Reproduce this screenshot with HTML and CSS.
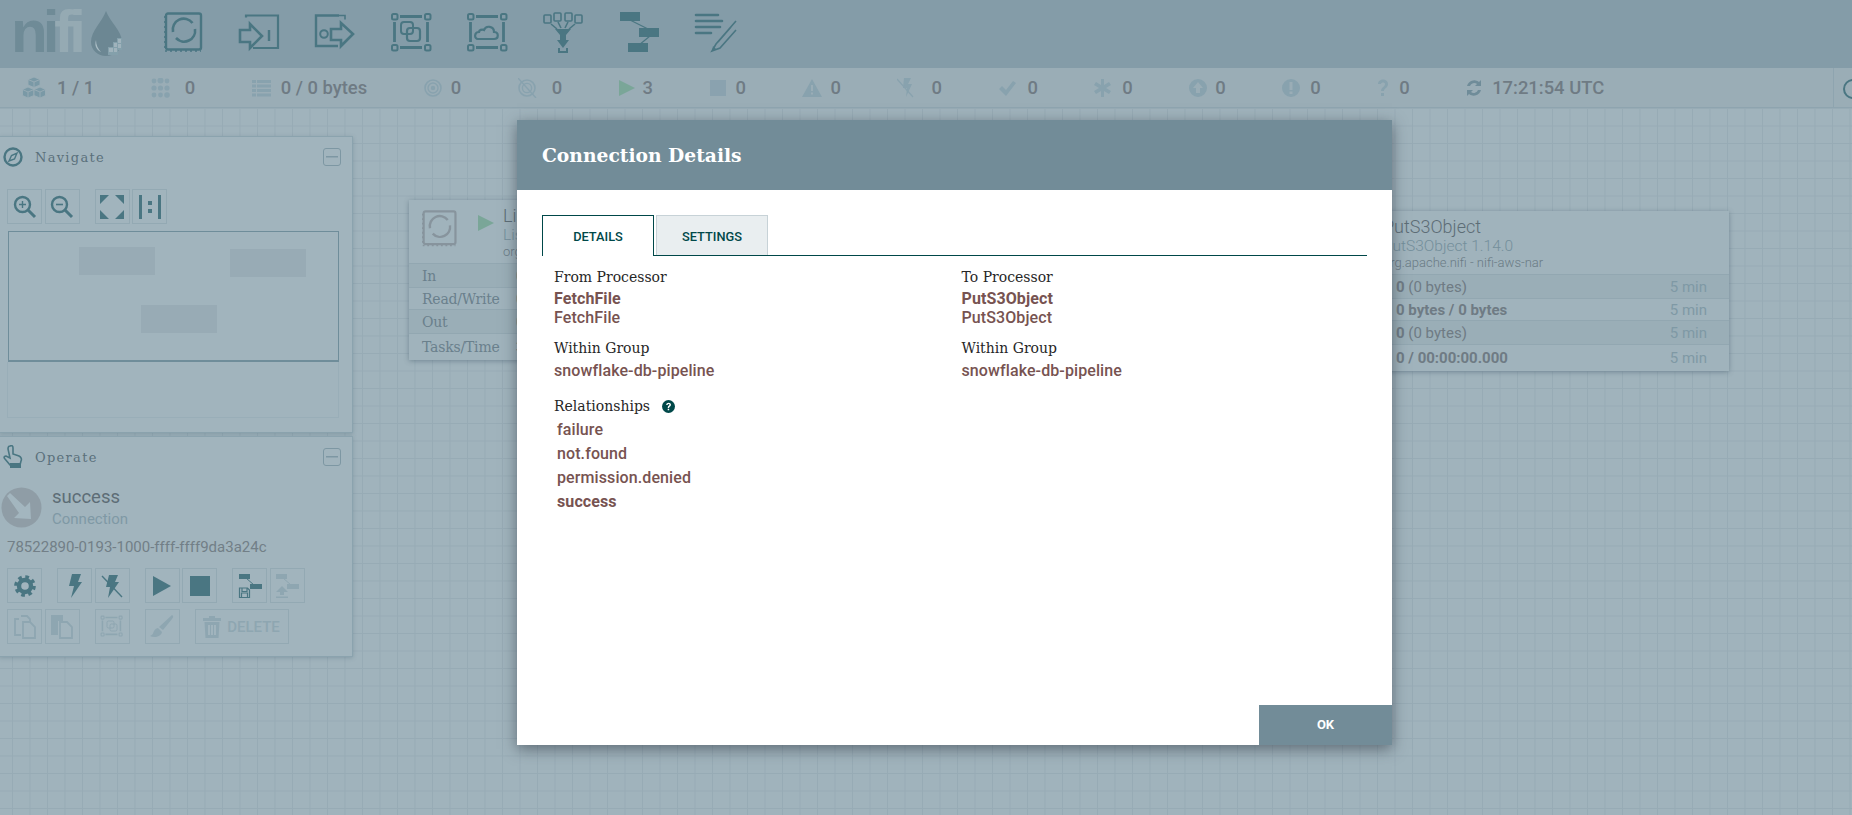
FILE: index.html
```html
<!DOCTYPE html>
<html lang="en">
<head>
  <meta charset="UTF-8"/>
  <title>NiFi Flow</title>
  <link rel="stylesheet" href="styles.css">
</head>
<body>
<svg class="defs" width="0" height="0">
  <symbol id="processor" viewBox="0 0 44 44">
    <rect x="4" y="1.5" width="35" height="36" rx="2" fill="none" stroke="currentColor" stroke-width="2.4"/>
    <path d="M3 4v34M3 39h36" fill="none" stroke="currentColor" stroke-width="1.6" stroke-dasharray="2 3"/>
    <path d="M11 20A11 11 0 0 1 30.500 11M33 17A11 11 0 0 1 14 26" fill="none" stroke="currentColor" stroke-width="2.6"/>
  </symbol>
  <symbol id="group" viewBox="0 0 44 44">
    <g fill="none" stroke="currentColor" stroke-width="2">
      <rect x="2" y="2" width="5.5" height="5.5" rx="1.5"/><rect x="35" y="2" width="5.5" height="5.5" rx="1.5"/>
      <rect x="2" y="33" width="5.5" height="5.5" rx="1.5"/><rect x="35" y="33" width="5.5" height="5.5" rx="1.5"/>
    </g>
    <path d="M10 4.5h22M10 35.5h22M4.5 10v20M37.5 10v20" stroke="currentColor" stroke-width="2.8"/>
  </symbol>
</svg>

<header class="toolbar">
  <div class="logo">
    <span class="logo-text"><span class="logo-ni">ni</span><span class="logo-fi">fi</span></span>
    <svg width="34" height="48" viewBox="0 0 34 48">
      <path d="M16 1C12 12 1 21 1 32c0 8 7 14 15 14s16-6 16-14C32 21 20 12 16 1z" fill="#6c8793"/>
      <path d="M6 30c-2 6 1 10 5 12-3-3-5-7-5-12z" fill="#a9bcc4"/>
      <path d="M18 37h5v-5h4v-4h5v12h-4v5h-10z" fill="#84a0ab"/>
      <path d="M19 38h4v4h-4zM24 38h3v4h-3zM24 33h3v4h-3zM28 29h3v4h-3zM28 34h3v4h-3z" fill="#a0b3bc"/>
    </svg>
  </div>
  <div class="tools">
    <svg class="tool"><use href="#processor"/></svg>
    <svg class="tool" viewBox="0 0 44 44">
      <path d="M8 3.5V1.5H40V34H15M8 29v-2" fill="none" stroke="currentColor" stroke-width="2.2" transform="translate(0 2)"/>
      <path d="M2 18h10v-6l12 12-12 12v-6H2z" fill="none" stroke="currentColor" stroke-width="2.6"/>
      <path d="M31 18v11" stroke="currentColor" stroke-width="2.4"/>
    </svg>
    <svg class="tool" viewBox="0 0 44 44">
      <path d="M25 3.5H2V34h22" fill="none" stroke="currentColor" stroke-width="2.4"/>
      <path d="M25 3.5h6v4" fill="none" stroke="currentColor" stroke-width="1.6"/>
      <circle cx="10" cy="22" r="3.8" fill="none" stroke="currentColor" stroke-width="2"/>
      <path d="M17 17h10v-6l12 11-12 12v-6H17z" fill="none" stroke="currentColor" stroke-width="2.6"/>
    </svg>
    <svg class="tool" viewBox="0 0 44 44">
      <use href="#group" width="44" height="44"/>
      <rect x="11" y="10" width="12" height="12" rx="3" fill="none" stroke="currentColor" stroke-width="2"/>
      <rect x="17" y="16" width="13" height="13" rx="3" fill="none" stroke="currentColor" stroke-width="2.2"/>
    </svg>
    <svg class="tool" viewBox="0 0 44 44">
      <use href="#group" width="44" height="44"/>
      <path d="M12 27c-4 0-4-7 1-7 0-2 3-3 5-2 2-5 10-4 10 2 5 0 5 7 0 7z" fill="none" stroke="currentColor" stroke-width="2.2"/>
    </svg>
    <svg class="tool" viewBox="0 0 44 44">
      <g fill="none" stroke="currentColor" stroke-width="1.6">
        <rect x="2" y="3" width="7" height="8" rx="1"/><rect x="12" y="1" width="7" height="8" rx="1"/>
        <rect x="23" y="1" width="7" height="8" rx="1"/><rect x="33" y="3" width="7" height="8" rx="1"/>
        <path d="M9 12l6 5M16 10l3 6M26 10l-3 6M33 12l-6 5"/>
      </g>
      <path d="M13 17h16l-5 6v5h-6v-5z" fill="currentColor"/>
      <path d="M15 28h12l-6 8z" fill="currentColor"/>
      <path d="M17 36v4h8v-4" fill="none" stroke="currentColor" stroke-width="2"/>
    </svg>
    <svg class="tool" viewBox="0 0 44 44">
      <path d="M2 0h20v9H2zM21 16h20v9H21zM10 31h20v9H10z" fill="currentColor"/>
      <path d="M12 8l20 10M32 24L21 33" stroke="currentColor" stroke-width="1.2"/>
    </svg>
    <svg class="tool" viewBox="0 0 44 44">
      <path d="M2 3h22M2 9h26M2 15h24M2 21h15" stroke="currentColor" stroke-width="2.6" stroke-linecap="round"/>
      <path d="M42 9L22 32l-4 7 8-3 16-18M37 15l-13 15" fill="none" stroke="currentColor" stroke-width="1.6"/>
      <path d="M18 39l1-5 3 3z" fill="currentColor"/>
    </svg>
  </div>
</header>

<div class="status">
  <div class="stat gap-11"><svg width="24" height="23" viewBox="0 0 24 23" class="ic-cubes">
    <g fill="currentColor" stroke="#9aadb6" stroke-width=".9" stroke-linejoin="round">
      <path d="M12 1l6 2.500V9l-6 2.500L6 9V3.500z"/>
      <path d="M6 11l6 2.500v6L6 22l-5.500-2.500v-6z"/>
      <path d="M18 11l5.500 2.500v6L18 22l-6-2.500v-6z"/>
    </g>
    <path d="M6 3.500l6 2.500 6-2.500M12 6v5.500M.5 13.500L6 16l6-2.500M6 16v6M12 13.500l6 2.500 5.500-2.500M18 16v6" fill="none" stroke="#9aadb6" stroke-width=".9"/>
  </svg><span>1 / 1</span></div>
  <div class="stat gap-15"><svg width="19" height="20" viewBox="0 0 19 20" class="ic-dim">
    <g fill="currentColor"><circle cx="3" cy="3" r="2.4"/><circle cx="9.5" cy="2.6" r="3"/><circle cx="16" cy="3" r="2.4"/><circle cx="3" cy="10" r="2.6"/><circle cx="9.5" cy="10" r="2.6"/><circle cx="16" cy="10" r="2.6"/><circle cx="3" cy="17" r="2.4"/><circle cx="9.5" cy="17" r="2.4"/><circle cx="16" cy="17" r="2.8"/></g>
  </svg><span>0</span></div>
  <div class="stat"><svg width="19" height="18" viewBox="0 0 19 18" class="ic-dim">
    <path d="M0 1h4v3H0zM5 1h14v3H5zM0 5.500h4v3H0zM5 5.500h14v3H5zM0 10h4v3H0zM5 10h14v3H5zM0 14.500h4v3H0zM5 14.500h14v3H5z" fill="currentColor"/>
  </svg><span>0 / 0 bytes</span></div>
  <div class="stat gap-9"><svg width="18" height="18" viewBox="0 0 18 18" class="ic-dim">
    <g fill="none" stroke="currentColor"><circle cx="9" cy="9" r="8" stroke-width="1.6"/><circle cx="9" cy="9" r="5" stroke-width="1.4"/></g><circle cx="9" cy="9" r="2.2" fill="currentColor"/>
  </svg><span>0</span></div>
  <div class="stat"><svg width="24" height="20" viewBox="0 0 24 20" class="ic-dim">
    <g fill="none" stroke="currentColor"><circle cx="9" cy="10" r="8" stroke-width="1.6"/><circle cx="9" cy="10" r="4.600" stroke-width="1.4"/><path d="M0 0l18 20" stroke-width="1.400"/></g>
  </svg><span>0</span></div>
  <div class="stat gap-8"><svg width="16" height="18" viewBox="0 0 16 18">
    <path d="M0 1l16 8-16 8z" fill="#7aa698"/>
  </svg><span>3</span></div>
  <div class="stat gap-9"><svg width="17" height="18" viewBox="0 0 17 18">
    <path d="M0 1h16v16H0z" fill="#8aa2af"/>
  </svg><span>0</span></div>
  <div class="stat gap-8"><svg width="20" height="18" viewBox="0 0 20 18" class="ic-dim">
    <path d="M10 0l10 18H0zM9 6v6h2V6zM9 13.500v2h2v-2z" fill-rule="evenodd" fill="currentColor"/>
  </svg><span>0</span></div>
  <div class="stat"><svg width="24" height="20" viewBox="0 0 24 20" class="ic-dim">
    <path d="M7 0h7l-3 6h4l-6 13 1-9H6z" fill="currentColor"/><path d="M0 1l16 18" stroke="currentColor" stroke-width="1.200"/>
  </svg><span>0</span></div>
  <div class="stat gap-9"><svg width="20" height="16" viewBox="0 0 20 16" class="ic-dim">
    <path d="M1 9l3-3 4 4L15 1l3 2-10 13z" fill="currentColor"/>
  </svg><span>0</span></div>
  <div class="stat gap-11"><svg width="17" height="18" viewBox="0 0 17 18" class="ic-dim">
    <path d="M7 0h3v6l5-3 2 3-5 3 5 3-2 3-5-3v6H7v-6l-5 3-2-3 5-3-5-3 2-3 5 3z" fill="currentColor"/>
  </svg><span>0</span></div>
  <div class="stat gap-8"><svg width="18" height="18" viewBox="0 0 18 18" class="ic-dim">
    <path d="M9 0a9 9 0 1 1 0 18A9 9 0 0 1 9 0zM9 3L4 9h3v5h4V9h3z" fill-rule="evenodd" fill="currentColor"/>
  </svg><span>0</span></div>
  <div class="stat"><svg width="18" height="18" viewBox="0 0 18 18" class="ic-dim">
    <path d="M9 0a9 9 0 1 1 0 18A9 9 0 0 1 9 0zM7.500 3v8h3V3zM7.500 12.500V15h3v-2.500z" fill-rule="evenodd" fill="currentColor"/>
  </svg><span>0</span></div>
  <div class="stat"><svg width="12" height="18" viewBox="0 0 12 18" class="ic-dim">
    <path d="M1 5c0-6 10-6 10 0 0 4-4 4-4 7H4c0-4 4-4 4-7 0-2-4-2-4 0zM4 14h3v3H4z" fill="currentColor"/>
  </svg><span>0</span></div>
  <div class="stat stat-clock"><svg width="18" height="20" viewBox="0 0 18 20" class="ic-refresh">
    <path d="M2 8a7.500 7.500 0 0 1 12-4l2-2v6h-6l2-2a4.500 4.500 0 0 0-7 2zM16 12a7.500 7.500 0 0 1-12 4l-2 2v-6h6l-2 2a4.500 4.500 0 0 0 7-2z" fill="currentColor"/>
  </svg><span>17:21:54 UTC</span></div>
  <div class="status-end"><span class="search-ring"></span></div>
</div>

<main class="canvas">
  <section class="palette palette-nav">
    <div class="palette-head">
      <svg width="20" height="20" viewBox="0 0 20 20">
        <circle cx="10" cy="10" r="8.500" fill="none" stroke="currentColor" stroke-width="2.400"/>
        <path d="M14 6l-2.500 6L6 14l2.500-5.500z" fill="none" stroke="currentColor" stroke-width="1.400"/>
      </svg>
      <span class="palette-title">Navigate</span>
      <span class="collapse"></span>
    </div>
    <div class="btn-row">
      <div class="btn-group">
        <span class="btn"><svg width="24" height="24" viewBox="0 0 24 24">
          <circle cx="9.500" cy="9.500" r="7.500" fill="none" stroke="currentColor" stroke-width="2.400"/>
          <path d="M15 15l7 7" stroke="currentColor" stroke-width="3"/><path d="M9.500 6v7M6 9.500h7" stroke="currentColor" stroke-width="1.400"/>
        </svg></span>
        <span class="btn"><svg width="24" height="24" viewBox="0 0 24 24">
          <circle cx="9.500" cy="9.500" r="7.500" fill="none" stroke="currentColor" stroke-width="2.400"/>
          <path d="M15 15l7 7" stroke="currentColor" stroke-width="3"/><path d="M6 9.500h7" stroke="currentColor" stroke-width="1.600"/>
        </svg></span>
      </div>
      <div class="btn-group">
        <span class="btn"><svg width="24" height="24" viewBox="0 0 24 24">
          <path d="M0 0h9L0 9zM24 0v9l-9-9zM0 24v-9l9 9zM24 24h-9l9-9z" fill="currentColor"/>
        </svg></span>
        <span class="btn"><svg width="24" height="24" viewBox="0 0 24 24">
          <path d="M1 0h3v24H1zM20 0h3v24h-3zM10 6h4v4h-4zM10 14h4v4h-4z" fill="currentColor"/>
        </svg></span>
      </div>
    </div>
    <div class="birdseye">
      <span class="mini mini-a"></span>
      <span class="mini mini-b"></span>
      <span class="mini mini-c"></span>
    </div>
    <div class="birdseye-foot"></div>
  </section>

  <section class="palette palette-op">
    <div class="palette-head">
      <svg width="20" height="24" viewBox="0 0 20 24">
        <path d="M7 1c2-1 3 0 3 2v6l6 2c2 1 3 3 2 5l-1 4H7l-5-6c-2-2 0-3 1-3l4 2-2-9c0-2 1-3 2-3z" fill="none" stroke="currentColor" stroke-width="1.600"/>
        <path d="M7 18h11v5H7z" fill="currentColor"/>
      </svg>
      <span class="palette-title">Operate</span>
      <span class="collapse"></span>
    </div>
    <div class="selection">
      <svg width="41" height="41" viewBox="0 0 41 41">
        <circle cx="20.500" cy="20.500" r="20" fill="#8f9da6"/>
        <path d="M6 9l3-3 15 14 5-5 1 17-17-1 5-5z" fill="#a3b6bf"/>
      </svg>
      <div>
        <div class="sel-name">success</div>
        <div class="sel-type">Connection</div>
      </div>
    </div>
    <div class="sel-id">78522890-0193-1000-ffff-ffff9da3a24c</div>
    <div class="btn-row">
      <div class="btn-group"><span class="btn"><svg width="22" height="22" viewBox="0 0 22 22">
        <circle cx="11" cy="11" r="9" fill="none" stroke="currentColor" stroke-width="3.600" stroke-dasharray="3.600 3.470"/>
        <circle cx="11" cy="11" r="6" fill="none" stroke="currentColor" stroke-width="4.400"/>
      </svg></span></div>
      <div class="btn-group">
        <span class="btn"><svg width="14" height="24" viewBox="0 0 14 24"><path d="M4 0h9l-3 8h4L3 24l3-12H1z" fill="currentColor"/></svg></span>
        <span class="btn"><svg width="24" height="24" viewBox="0 0 24 24"><path d="M9 1h9l-3 7h4L8 24l2-11H6z" fill="currentColor"/><path d="M2 2l20 21" stroke="currentColor" stroke-width="1.400"/></svg></span>
      </div>
      <div class="btn-group">
        <span class="btn"><svg width="20" height="22" viewBox="0 0 20 22"><path d="M1 1l18 10L1 21z" fill="currentColor"/></svg></span>
        <span class="btn"><svg width="20" height="20" viewBox="0 0 20 20"><path d="M0 0h20v20H0z" fill="currentColor"/></svg></span>
      </div>
      <div class="btn-group">
        <span class="btn"><svg width="24" height="24" viewBox="0 0 24 24">
          <path d="M1 0h11v5H1zM12 10h12v5H12z" fill="currentColor"/><path d="M8 4l8 7" stroke="currentColor"/>
          <path d="M1.500 14h8l2 2v7.500h-10zM4 14.500v3h5v-3M3.500 23v-4h6v4" fill="none" stroke="currentColor" stroke-width="1.200"/>
        </svg></span>
        <span class="btn btn-off"><svg width="24" height="24" viewBox="0 0 24 24">
          <path d="M1 0h11v5H1zM12 10h12v5H12z" fill="currentColor"/><path d="M8 4l8 7" stroke="currentColor"/>
          <path d="M7 12l-6 6h4v3h4v-3h4zM1 22.500h12V24H1z" fill="currentColor"/>
        </svg></span>
      </div>
    </div>
    <div class="btn-row btn-row-off">
      <div class="btn-group">
        <span class="btn btn-off"><svg width="24" height="24" viewBox="0 0 24 24">
          <path d="M7 1h6l3 3v3M5 4H1v16h6" fill="none" stroke="currentColor" stroke-width="1.800" transform="translate(1 0)"/>
          <path d="M10 7h7l5 5v11H10z" fill="none" stroke="currentColor" stroke-width="1.800"/>
        </svg></span>
        <span class="btn btn-off"><svg width="24" height="24" viewBox="0 0 24 24">
          <path d="M1 0h12v6H8v14H1z" fill="currentColor"/>
          <path d="M10 7h7l5 5v11H10z" fill="none" stroke="currentColor" stroke-width="1.800"/>
        </svg></span>
      </div>
      <div class="btn-group">
        <span class="btn btn-off"><svg width="24" height="24"><use href="#group" width="24" height="24"/>
          <rect x="7" y="6" width="7" height="7" rx="1.500" fill="none" stroke="currentColor"/><rect x="10" y="9" width="7" height="7" rx="1.500" fill="none" stroke="currentColor"/>
        </svg></span>
      </div>
      <div class="btn-group">
        <span class="btn btn-off"><svg width="24" height="24" viewBox="0 0 24 24">
          <path d="M22 0c2 1 1 3 0 4l-9 11-4-3zM8 13l4 4c-1 5-8 6-12 4 3-1 3-3 4-5 1-2 3-3 4-3z" fill="currentColor"/>
        </svg></span>
      </div>
      <div class="btn-group">
        <span class="btn btn-off btn-delete"><svg width="18" height="22" viewBox="0 0 18 22">
          <path d="M6 0h6v2h6v3H0V2h6zM1.500 6h15l-1 16h-13zM5 9v10h2V9zM8 9v10h2V9zM11 9v10h2V9z" fill-rule="evenodd" fill="currentColor"/>
        </svg><span>DELETE</span></span>
      </div>
    </div>
  </section>

  <article class="proc proc-left">
    <div class="proc-head">
      <svg class="proc-icon"><use href="#processor"/></svg>
      <svg class="proc-state" width="16" height="18" viewBox="0 0 16 18"><path d="M0 1l16 8-16 8z"/></svg>
      <div class="proc-names">
        <div class="proc-name">ListFile</div>
        <div class="proc-type">ListFile</div>
        <div class="proc-bundle">org.apache</div>
      </div>
    </div>
    <div class="proc-row"><span class="proc-label">In</span><span class="proc-val"><b>0</b></span></div>
    <div class="proc-row"><span class="proc-label">Read/Write</span><span class="proc-val"><b>0</b></span></div>
    <div class="proc-row"><span class="proc-label">Out</span><span class="proc-val"><b>0</b></span></div>
    <div class="proc-row"><span class="proc-label">Tasks/Time</span><span class="proc-val"><b>3</b></span></div>
  </article>

  <article class="proc proc-right">
    <div class="proc-head">
      <div class="proc-names">
        <div class="proc-name">PutS3Object</div>
        <div class="proc-type">PutS3Object 1.14.0</div>
        <div class="proc-bundle">org.apache.nifi - nifi-aws-nar</div>
      </div>
    </div>
    <div class="proc-row"><span class="proc-label">In</span><span class="proc-val"><b>0</b> (0 bytes)</span><span class="proc-time">5 min</span></div>
    <div class="proc-row"><span class="proc-label">Read/Write</span><span class="proc-val"><b>0 bytes / 0 bytes</b></span><span class="proc-time">5 min</span></div>
    <div class="proc-row"><span class="proc-label">Out</span><span class="proc-val"><b>0</b> (0 bytes)</span><span class="proc-time">5 min</span></div>
    <div class="proc-row"><span class="proc-label">Tasks/Time</span><span class="proc-val"><b>0 / 00:00:00.000</b></span><span class="proc-time">5 min</span></div>
  </article>
</main>

<div class="dialog">
  <div class="dialog-head">Connection Details</div>
  <div class="dialog-body">
    <div class="tabs">
      <div class="tab tab-active">Details</div>
      <div class="tab">Settings</div>
    </div>
    <div class="columns">
      <div class="col">
        <div class="setting-name">From Processor</div>
        <div class="setting-val val-strong">FetchFile</div>
        <div class="setting-val">FetchFile</div>
        <div class="setting-name setting-gap">Within Group</div>
        <div class="setting-val">snowflake-db-pipeline</div>
        <div class="setting-name rel-title">Relationships
          <svg width="13" height="13" viewBox="0 0 13 13">
            <circle cx="6.500" cy="6.500" r="6.500" fill="#004849"/>
            <path d="M4.200 5c0-3 4.800-3 4.800-.2C9 6.500 7.100 6.500 7.100 8H5.700c0-2.300 1.800-2.200 1.800-3.200 0-1-1.800-1-1.900.2zM5.700 8.800h1.500v1.500H5.700z" fill="#fff"/>
          </svg>
        </div>
        <div class="rel">failure</div>
        <div class="rel">not.found</div>
        <div class="rel">permission.denied</div>
        <div class="rel rel-on">success</div>
      </div>
      <div class="col">
        <div class="setting-name">To Processor</div>
        <div class="setting-val val-strong">PutS3Object</div>
        <div class="setting-val">PutS3Object</div>
        <div class="setting-name setting-gap">Within Group</div>
        <div class="setting-val">snowflake-db-pipeline</div>
      </div>
    </div>
  </div>
  <div class="dialog-foot"><span class="ok-btn">OK</span></div>
</div>
</body>
</html>
```

FILE: styles.css
```css
html, body {
  height: 100%;
}
body {
  margin: 0;
  height: 815px;
  overflow: hidden;
  display: flex;
  flex-direction: column;
  font-family: Roboto, sans-serif;
  background-color: #a0b3bc;
  color: #6f7f88;
}
.defs {
  display: none;
}

/* top toolbar */
.toolbar {
  height: 68px;
  flex: none;
  display: flex;
  align-items: center;
  background-color: #849ca8;
  color: #4a7682;
}
.logo {
  width: 162px;
  flex: none;
  display: flex;
  align-items: center;
  padding-left: 11px;
  box-sizing: border-box;
  gap: 4px;
}
.logo-text {
  font-family: "Liberation Sans", sans-serif;
  font-weight: bold;
  font-size: 60px;
  line-height: 58px;
  letter-spacing: -5px;
  width: 75px;
  margin-top: -5px;
}
.logo-ni {
  color: #6f8b97;
}
.logo-fi {
  color: #95aab3;
}
.tools {
  display: flex;
  gap: 32px;
  height: 44px;
  align-self: flex-start;
  margin-top: 12px;
}
.tool {
  width: 44px;
  height: 44px;
}

/* status bar */
.status {
  height: 40px;
  flex: none;
  box-sizing: border-box;
  display: flex;
  align-items: center;
  gap: 56.500px;
  padding-left: 22px;
  background-color: #9aadb6;
  border-bottom: 1px solid #8ea4af;
  font-size: 18.400px;
  font-weight: 500;
  color: #6f7b84;
  position: relative;
}
.stat {
  display: flex;
  align-items: center;
  gap: 10px;
}
.gap-8 {
  gap: 8px;
}
.gap-9 {
  gap: 9px;
}
.gap-11 {
  gap: 11px;
}
.gap-15 {
  gap: 15px;
}
.stat-clock {
  margin-left: -1px;
  gap: 9px;
}
.ic-cubes {
  color: #7a99a6;
}
.ic-dim {
  color: #88a2ae;
}
.ic-refresh {
  color: #6f8c99;
}
.status-end {
  position: absolute;
  right: 0;
  top: 0;
  bottom: 0;
  width: 18px;
  overflow: hidden;
  border-left: 1px solid #8ea4af;
}
.search-ring {
  display: block;
  width: 16px;
  height: 16px;
  margin: 11px 0 0 9px;
  border: 2px solid #4a7682;
  border-radius: 50%;
}

/* canvas */
.canvas {
  flex: 1;
  position: relative;
  overflow: hidden;
  background-color: #a0b3bc;
  background-image:
    linear-gradient(to right, #97abb5 1px, transparent 1px),
    linear-gradient(to bottom, #97abb5 1px, transparent 1px);
  background-size: 17.500px 17.500px;
  background-position: 12px 0;
}

/* palettes */
.palette {
  position: absolute;
  left: -1px;
  width: 354px;
  box-sizing: border-box;
  background-color: #a1b4bd;
  border: 1px solid #8ba3ae;
  box-shadow: 0 1px 4px rgba(70, 100, 115, 0.3);
  color: #4a7682;
  padding-left: 7px;
}
.palette-nav {
  top: 28px;
  height: 297px;
}
.palette-op {
  top: 328px;
  height: 221px;
}
.palette-head {
  height: 40px;
  display: flex;
  align-items: center;
  position: relative;
  margin-left: -4px;
  gap: 12px;
}
.palette-head svg {
  width: 20px;
  flex: none;
}
.palette-title {
  font-family: "DejaVu Serif", serif;
  font-size: 13px;
  letter-spacing: 1.300px;
  color: #5a707b;
}
.collapse {
  position: absolute;
  right: 11px;
  top: 11px;
  width: 16px;
  height: 16px;
  border: 1px solid #7d97a3;
  border-radius: 3px;
  background: linear-gradient(#7d97a3, #7d97a3) center / 12px 1.500px no-repeat;
}
.btn-row {
  display: flex;
  gap: 15px;
  margin-top: 12px;
}
.btn-group {
  display: flex;
  gap: 2.500px;
}
.btn {
  width: 35px;
  height: 35px;
  box-sizing: border-box;
  border: 1px solid #93a9b3;
  display: flex;
  align-items: center;
  justify-content: center;
  color: #4a7682;
}
.btn-off {
  color: #8ea6b1;
}
.btn-delete {
  width: 94px;
  gap: 6px;
  font-weight: 500;
  font-size: 15px;
}
.btn-row-off {
  margin-top: 6px;
}
.birdseye {
  position: relative;
  width: 331px;
  height: 131px;
  box-sizing: border-box;
  margin: 7px 0 0 1px;
  border: 1px solid #6f8d9a;
  border-bottom-width: 2px;
}
.mini {
  position: absolute;
  width: 76px;
  height: 28px;
  background-color: #98abb5;
}
.mini-a {
  left: 70px;
  top: 15px;
}
.mini-b {
  left: 221px;
  top: 17px;
}
.mini-c {
  left: 132px;
  top: 73px;
}
.birdseye-foot {
  width: 332px;
  height: 56px;
  box-sizing: border-box;
  border: 1px solid #99aeb8;
  border-top: none;
}
.selection {
  display: flex;
  gap: 10px;
  margin: 10px 0 0 -6px;
  align-items: center;
}
.sel-name {
  font-size: 18.500px;
  color: #5d6d76;
  margin-top: -2px;
}
.sel-type {
  font-size: 15px;
  color: #7f99a5;
  margin-top: 2px;
}
.sel-id {
  font-size: 15px;
  color: #727f87;
  margin-top: 10px;
  line-height: 18px;
}

/* processors on the canvas */
.proc {
  position: absolute;
  width: 440px;
  height: 160px;
  display: flex;
  flex-direction: column;
  background-color: #a0b3bc;
  box-shadow: 0 1px 5px rgba(60, 85, 100, 0.45);
  font-size: 15px;
  color: #6f7b84;
}
.proc-left {
  left: 409px;
  top: 92px;
  width: 130px;
}
.proc-right {
  left: 1289px;
  top: 103px;
}
.proc-head {
  height: 63px;
  flex: none;
  display: flex;
  position: relative;
  padding-left: 94px;
  box-sizing: border-box;
}
.proc-icon {
  position: absolute;
  left: 11px;
  top: 10px;
  width: 40px;
  height: 40px;
  color: #87949d;
}
.proc-state {
  position: absolute;
  left: 69px;
  top: 14px;
  fill: #7aa698;
}
.proc-names {
  padding-top: 5px;
}
.proc-name {
  font-size: 18px;
  font-weight: 300;
  line-height: 21px;
  color: #5d6d76;
}
.proc-type {
  font-size: 15.500px;
  font-weight: 300;
  line-height: 18px;
  color: #748f9b;
}
.proc-bundle {
  font-size: 13px;
  font-weight: 300;
  line-height: 16px;
  color: #6a7b85;
}
.proc-row {
  height: 23px;
  display: flex;
  align-items: center;
  padding-right: 22px;
  border-top: 1px solid #92a7b1;
}
.proc-row:nth-of-type(even) {
  background-color: #9aaeb7;
}
.proc-row:nth-of-type(3) {
  height: 21px;
}
.proc-row:last-child {
  height: 26px;
}
.proc-label {
  flex: none;
  width: 94px;
  padding-left: 13px;
  font-family: "DejaVu Serif", serif;
  font-size: 14px;
  letter-spacing: -.2px;
  color: #6a808c;
}
.proc-val {
  flex: 1;
}
.proc-time {
  color: #7f99a5;
}

/* connection details dialog */
.dialog {
  position: absolute;
  left: 517px;
  top: 120px;
  width: 875px;
  height: 625px;
  display: flex;
  flex-direction: column;
  background-color: #fff;
  box-shadow: 0 4px 14px rgba(40, 50, 60, 0.55);
}
.dialog-head {
  height: 70px;
  flex: none;
  box-sizing: border-box;
  padding: 0 25px;
  line-height: 70px;
  background-color: #728c98;
  color: #fff;
  font-family: "DejaVu Serif", serif;
  font-weight: bold;
  font-size: 18.700px;
}
.dialog-body {
  flex: 1;
  padding: 25px 25px 0;
}
.tabs {
  display: flex;
  gap: 2px;
  height: 41px;
  box-sizing: border-box;
  border-bottom: 1px solid #004849;
}
.tab {
  width: 112px;
  height: 40px;
  box-sizing: border-box;
  border: 1px solid #c7d2d7;
  border-bottom: none;
  background-color: #e9eef0;
  color: #004849;
  text-align: center;
  line-height: 41px;
  font-size: 12.800px;
  font-weight: 500;
  text-transform: uppercase;
}
.tab-active {
  background-color: #fff;
  border-color: #004849;
  height: 41px;
}
.columns {
  display: flex;
  padding: 11px 0 0 12px;
}
.col {
  flex: none;
  width: 407.500px;
}
.setting-name {
  font-family: "DejaVu Serif", serif;
  font-size: 14px;
  line-height: 20px;
  color: #262626;
}
.setting-val {
  font-size: 16px;
  font-weight: 500;
  line-height: 19px;
  letter-spacing: .1px;
  color: #775351;
}
.val-strong {
  font-weight: 700;
  margin-top: 2px;
}
.setting-gap {
  margin-top: 11px;
  margin-bottom: 3px;
}
.rel-title {
  margin-top: 16px;
  margin-bottom: 2px;
  display: flex;
  align-items: center;
  gap: 12px;
}
.rel {
  font-size: 16px;
  font-weight: 500;
  line-height: 24px;
  letter-spacing: .1px;
  color: #775351;
  padding-left: 3px;
}
.rel-on {
  font-weight: 700;
}
.dialog-foot {
  display: flex;
  justify-content: flex-end;
}
.ok-btn {
  width: 133px;
  height: 40px;
  line-height: 40px;
  text-align: center;
  background-color: #728c98;
  color: #fff;
  font-size: 13px;
  font-weight: 700;
}
```
